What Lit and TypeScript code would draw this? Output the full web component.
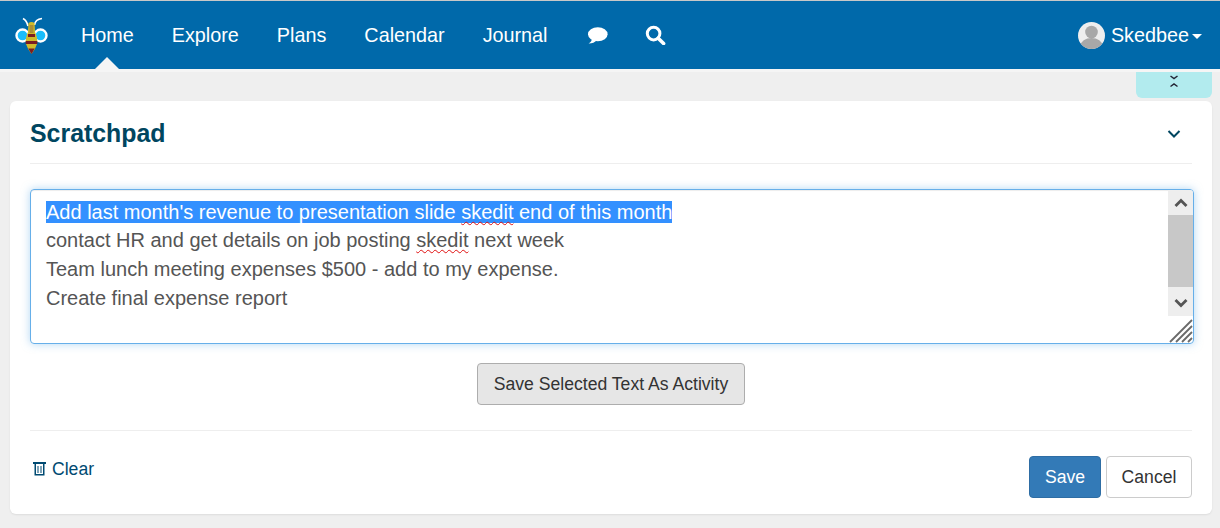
import { LitElement, html, css, svg } from "lit";
import { customElement } from "lit/decorators.js";

const bee = svg`<svg class="bee" width="36" height="38" viewBox="0 0 36 38">
  <path d="M14 10 C13 6 12 4 9 2.500" fill="none" stroke="#fff" stroke-width="1.7"/>
  <path d="M20.500 9 C21 5 24 3 28 2.500" fill="none" stroke="#fff" stroke-width="1.7"/>
  <circle cx="8.500" cy="19.500" r="6" fill="#19bdfb" stroke="#fff" stroke-width="2.400"/>
  <circle cx="26.500" cy="19.500" r="6" fill="#19bdfb" stroke="#fff" stroke-width="2.400"/>
  <path d="M14.500 7 Q17.500 5 20.500 7 L21 16 Q24 22 23 28 Q21.500 33 17.500 38 Q13.500 33 12 28 Q11 22 14 16 Z" fill="#d0bb2a"/>
  <path d="M14 18h7v3h-7zM11.700 25h11.600v3H11.700zM14.300 32.500h6.400L17.500 38z" fill="#7c1d22"/>
  <path d="M15.500 9h4v8h-4z" fill="#9c7a3a" opacity=".7"/>
</svg>`;

@customElement("app-root")
export class AppRoot extends LitElement {
  static styles = css`
    :host { display: block; width: 1220px; height: 528px; overflow: hidden; background: #efefef; font-family: "Liberation Sans", Arial, sans-serif; box-sizing: border-box; }
    * { box-sizing: border-box; }
    .topline { height: 1px; background: #c8c8c8; }
    .nav { height: 68px; background: #0069aa; display: flex; align-items: center; padding: 0 18px 0 14px; color: #fff; font-size: 19.8px; }
    .bee { display: block; margin-top: -1px; flex: none; }
    .links { display: flex; align-items: center; gap: 38px; margin-left: 31px; }
    .links > span { display: block; position: relative; }
    .active::after { content: ""; position: absolute; left: 50%; margin-left: -12px; bottom: -22px; border: 12px solid transparent; border-top: 0; border-bottom-color: #f5f5f5; }
    .icon { display: block; }
    .icons { display: flex; align-items: center; gap: 37px; margin-left: 1px; }
    .user { margin-left: auto; display: flex; align-items: center; gap: 6px; }
    .avatar { display: block; }
    .caret { width: 0; height: 0; border: 5px solid transparent; border-bottom: 0; border-top-color: #fff; margin-left: -3px; margin-top: 3px; }
    .strip { height: 3px; background: #f5f5f5; }
    .tabrow { display: flex; justify-content: flex-end; padding-right: 8px; height: 29px; }
    .tab { width: 76px; height: 26px; background: #b2ebee; border-radius: 0 0 6px 6px; display: flex; justify-content: center; padding-top: 3px; }
    .card { margin: 0 8px 0 10px; height: 413px; background: #fff; border-radius: 6px; box-shadow: 0 1px 2px rgba(0,0,0,.08); padding: 0 20px; display: flex; flex-direction: column; }
    .head { height: 63px; display: flex; align-items: center; justify-content: space-between; border-bottom: 1px solid #eee; padding: 3px 11px 0 0; }
    h1 { margin: 0; font-size: 24.9px; font-weight: 700; color: #004660; }
    .area { margin: 25px -2px 0 0; height: 155px; border: 1px solid #66afe9; border-radius: 4px; box-shadow: 0 0 8px rgba(102,175,233,.5), inset 0 1px 1px rgba(0,0,0,.075); position: relative; display: flex; overflow: hidden; }
    .text { flex: 1; padding: 7.500px 15px; font-size: 20px; line-height: 28.7px; color: #555; white-space: pre; }
    .sel { background: #3390ff; color: #fff; }
    .sk { text-decoration: underline wavy #e01010; text-decoration-thickness: 1px; text-underline-offset: 2px; }
    .sb { width: 25px; height: 126px; background: #eee; display: flex; flex-direction: column; align-items: center; flex: none; }
    .sb .arrow { height: 25px; display: flex; align-items: center; justify-content: center; flex: none; }
    .thumb { width: 100%; height: 72px; background: #c8c8c8; flex: none; }
    .sb .arrow.dn { height: 29px; padding-top: 3px; }
    .grip { position: absolute; right: 0; bottom: 0; display: block; }
    .mid { display: flex; justify-content: center; margin-top: 19px; height: 68px; border-bottom: 1px solid #eee; }
    button { font: inherit; font-size: 17.6px; border-radius: 4px; cursor: pointer; padding: 0; }
    .act { width: 268px; height: 42px; background: #e6e6e6; border: 1px solid #adadad; color: #333; }
    .foot { display: flex; justify-content: space-between; flex: 1; }
    .clear { display: flex; align-items: center; gap: 6px; height: 20px; margin: 28px 0 0 3px; color: #004a72; font-size: 17.6px; }
    .btns { display: flex; gap: 5px; margin-top: 25px; }
    .save { width: 72px; height: 42px; background: #337ab7; border: 1px solid #2e6da4; color: #fff; }
    .cancel { width: 86px; height: 42px; background: #fff; border: 1px solid #ccc; color: #333; }
  `;

  render() {
    return html`
      <div class="topline"></div>
      <div class="nav">
        ${bee}
        <div class="links">
          <span class="active">Home</span><span>Explore</span><span>Plans</span><span>Calendar</span><span>Journal</span>
          <div class="icons">
            <svg class="icon" width="21" height="17" viewBox="0 0 21 17"><ellipse cx="10.8" cy="7.2" rx="9.8" ry="7" fill="#fff"/><path d="M5 11 Q5 14.5 1.5 16.5 Q7 16.5 10 13 Z" fill="#fff"/></svg>
            <svg class="icon" width="21" height="20" viewBox="0 0 21 20"><circle cx="8.6" cy="8.6" r="6.3" fill="none" stroke="#fff" stroke-width="3"/><path d="M13.2 13.2 L18.6 18.6" stroke="#fff" stroke-width="3.6" stroke-linecap="round"/></svg>
          </div>
        </div>
        <div class="user">
          <svg class="avatar" width="27" height="27" viewBox="0 0 27 27"><defs><clipPath id="c"><circle cx="13.5" cy="13.5" r="13.5"/></clipPath></defs><circle cx="13.5" cy="13.5" r="13.5" fill="#eee"/><g clip-path="url(#c)" fill="#a8a8a8"><circle cx="13.5" cy="10" r="6.3"/><ellipse cx="13.5" cy="24" rx="11" ry="8"/></g></svg>
          <span>Skedbee</span><span class="caret"></span>
        </div>
      </div>
      <div class="strip"></div>
      <div class="tabrow"><div class="tab">
        <svg width="10" height="14" viewBox="0 0 10 14"><path d="M1.5 1 L5 3.5 L8.5 1 M1.5 11.5 L5 9 L8.5 11.5" fill="none" stroke="#223" stroke-width="1.5"/></svg>
      </div></div>
      <div class="card">
        <div class="head"><h1>Scratchpad</h1>
          <svg width="14" height="10" viewBox="0 0 14 10"><path d="M1.5 2 L7 7.5 L12.5 2" fill="none" stroke="#004660" stroke-width="2"/></svg>
        </div>
        <div class="area">
          <div class="text"><span class="sel">Add last month's revenue to presentation slide <span class="sk">skedit</span> end of this month</span>
contact HR and get details on job posting <span class="sk">skedit</span> next week
Team lunch meeting expenses $500 - add to my expense.
Create final expense report</div>
          <div class="sb">
            <div class="arrow"><svg width="14" height="10" viewBox="0 0 14 10"><path d="M1.5 8 L7 2.5 L12.5 8" fill="none" stroke="#555" stroke-width="2.8"/></svg></div>
            <div class="thumb"></div>
            <div class="arrow dn"><svg width="14" height="10" viewBox="0 0 14 10"><path d="M1.5 2 L7 7.5 L12.5 2" fill="none" stroke="#555" stroke-width="2.8"/></svg></div>
          </div>
          <svg class="grip" width="24" height="24" viewBox="0 0 24 24"><path d="M1 23 L23 1 M7 23 L23 7 M13 23 L23 13 M19 23 L23 19" stroke="#6a6a6a" stroke-width="1.8" fill="none"/></svg>
        </div>
        <div class="mid"><button class="act">Save Selected Text As Activity</button></div>
        <div class="foot">
          <div class="clear">
            <svg width="13" height="14" viewBox="0 0 13 14"><path d="M0 0h13v2H0zM1.500 2h1.500v10h7V2h1.500v11.500h-10zM4.500 4h1v7h-1zM7.500 4h1v7h-1z" fill="#004a72"/></svg>
            <span>Clear</span>
          </div>
          <div class="btns"><button class="save">Save</button><button class="cancel">Cancel</button></div>
        </div>
      </div>
    `;
  }
}
